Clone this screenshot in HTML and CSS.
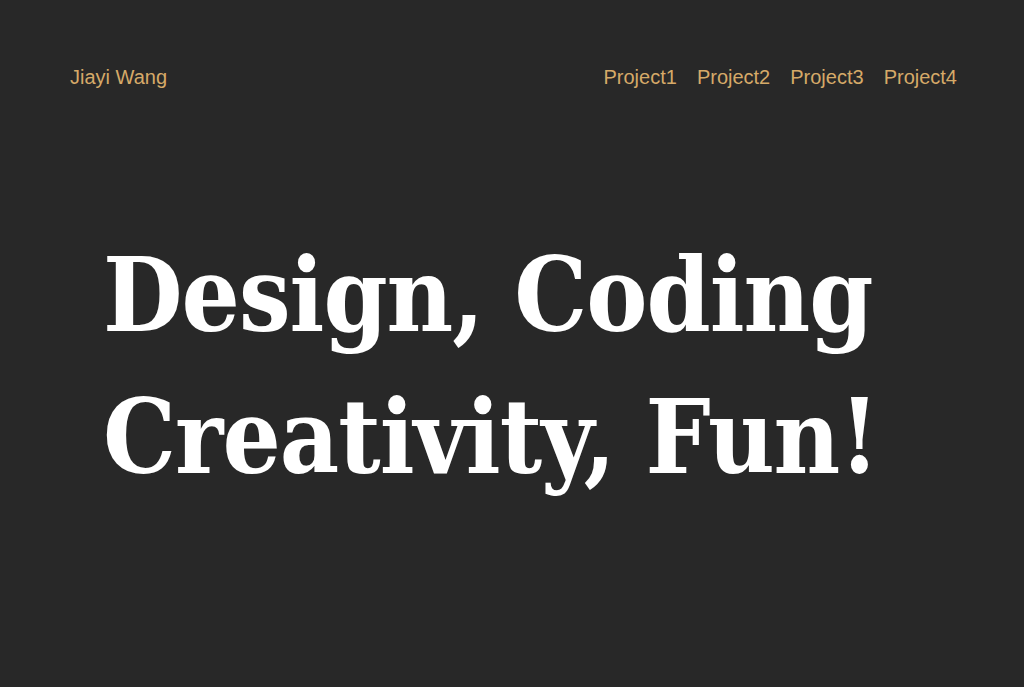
FILE: index.html
```html
<!DOCTYPE html>
<html lang="en">
<head>
<meta charset="utf-8">
<title>Jiayi Wang</title>
<link rel="stylesheet" href="styles.css">
</head>
<body>
<header class="nav">
  <a class="brand" href="#">Jiayi Wang</a>
  <nav class="links">
    <a href="#">Project1</a>
    <a href="#">Project2</a>
    <a href="#">Project3</a>
    <a href="#">Project4</a>
  </nav>
</header>
<main class="hero">
  <h1 class="title">Design, Coding<br>Creativity, Fun!</h1>
</main>
</body>
</html>
```
FILE: styles.css
```css
html, body {
  margin: 0;
  padding: 0;
  background: #282828;
  height: 100%;
}
body {
  font-family: "Liberation Sans", Arial, sans-serif;
}
.nav {
  display: flex;
  justify-content: space-between;
  align-items: center;
  padding: 66px 67px 0 70px;
  height: 22px;
}
.nav a {
  color: #d6aa68;
  text-decoration: none;
  font-size: 20px;
  line-height: 22px;
}
.links {
  display: flex;
  gap: 20px;
}
.hero {
  padding: 136px 0 0 103px;
}
.title {
  margin: 0;
  font-family: "DejaVu Serif", "Liberation Serif", serif;
  font-stretch: condensed;
  font-weight: bold;
  color: #ffffff;
  font-size: 102px;
  line-height: 142px;
  letter-spacing: -1px;
}
```
